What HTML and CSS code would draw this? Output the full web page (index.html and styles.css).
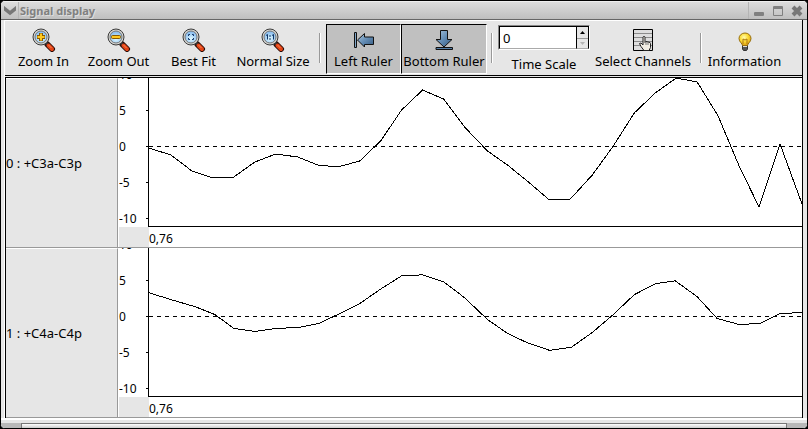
FILE: index.html
```html
<!DOCTYPE html>
<html lang="en">
<head>
<meta charset="utf-8">
<meta name="viewport" content="width=device-width, initial-scale=1">
<title>Signal display</title>
<link rel="stylesheet" href="styles.css">
</head>
<body>
<svg class="defs" width="0" height="0" aria-hidden="true">
  <defs>
    <radialGradient id="glass" cx="50%" cy="65%" r="60%"><stop offset="0" stop-color="#e4fbff"/><stop offset="1" stop-color="#83b9ee"/></radialGradient>
    <linearGradient id="steel" x1="0" y1="0" x2="1" y2="1"><stop offset="0" stop-color="#a9c6de"/><stop offset=".5" stop-color="#638cb4"/><stop offset="1" stop-color="#34597f"/></linearGradient>
    <radialGradient id="bulb" cx="42%" cy="35%" r="65%"><stop offset="0" stop-color="#fffbb0"/><stop offset=".5" stop-color="#fbdc37"/><stop offset="1" stop-color="#e0a010"/></radialGradient>
    <symbol id="lens" viewBox="0 0 24 24">
      <path d="M15.5 16.5l4.5 4.5" stroke="#2a0d08" stroke-width="6" stroke-linecap="round"/>
      <path d="M13.500 14.500l2 2" stroke="#333" stroke-width="3"/>
      <path d="M16.500 17.500l3.500 3.500" stroke="#e34416" stroke-width="4" stroke-linecap="round"/>
      <path d="M16.500 17l3 3" stroke="#ff8855" stroke-width="1"/>
      <circle cx="9" cy="9" r="8" fill="#d7d7d3" stroke="#3a3a3a"/>
      <circle cx="9" cy="9" r="6" fill="url(#glass)" stroke="#777"/>
    </symbol>
  </defs>
</svg>
<div class="window">
  <header class="titlebar">
    <button class="wm menu" aria-label="Window menu"><svg width="14" height="10" viewBox="0 0 14 10"><path d="M2 2l5 4 5-4v2L7 8 2 4z" fill="#777" stroke="#777" stroke-width="2"/></svg></button>
    <h1>Signal display</h1>
    <div class="wm-group">
      <button class="wm" aria-label="Minimize"><svg width="12" height="12"><rect x="1" y="7" width="10" height="4" rx="1" fill="#808080"/></svg></button>
      <button class="wm" aria-label="Maximize"><svg width="12" height="12"><path d="M1.500 2v8.500h9V2" fill="none" stroke="#808080"/><rect x="1" y="1" width="10" height="3" rx="1" fill="#808080"/></svg></button>
      <button class="wm" aria-label="Close"><svg width="12" height="12"><path d="M2 2l8 8M10 2l-8 8" stroke="#777" stroke-width="4"/></svg></button>
    </div>
  </header>
  <div class="frame">
    <nav class="toolbar" aria-label="Signal tools">
      <button class="tool"><svg width="24" height="24"><use href="#lens"/><path d="M9 5v8M5 9h8" stroke="#8a5a00" stroke-width="4"/><path d="M9 5.500v7M5.500 9h7" stroke="#ffc81e" stroke-width="2"/></svg><span>Zoom In</span></button>
      <button class="tool"><svg width="24" height="24"><use href="#lens"/><rect x="4.500" y="7.500" width="9" height="3" rx="1" fill="#ffc81e" stroke="#8a5a00"/></svg><span>Zoom Out</span></button>
      <button class="tool"><svg width="24" height="24"><use href="#lens"/><path d="M8 6.500H6.500V8M10 6.500h1.500V8M6.500 10v1.500H8M11.500 10v1.500H10" fill="none" stroke="#123b70" stroke-width="1"/></svg><span>Best Fit</span></button>
      <button class="tool wide"><svg width="24" height="24"><use href="#lens"/><path d="M5 7.500l1.500-1v5M11 7.500l1.500-1v5M9 7v2M9 10v2" fill="none" stroke="#0d3566" stroke-width="1"/></svg><span>Normal Size</span></button>
      <i class="sep"></i>
      <button class="tool toggle" aria-pressed="true"><svg width="24" height="24"><path d="M2.500 4.500h2v15h-2z" fill="#7fa5c8" stroke="#111"/><path d="M5.500 12l7-6.500V9H21.500v7.500H12.500V19z" fill="url(#steel)" stroke="#111"/></svg><span>Left Ruler</span></button>
      <button class="tool toggle long" aria-pressed="true"><svg width="24" height="24"><path d="M8.500 2.500h7v9h4.500l-8 7.500-8-7.500h4.500z" fill="url(#steel)" stroke="#111"/><path d="M4 19.500h16.500v2H4z" fill="#557fa9" stroke="#111"/></svg><span>Bottom Ruler</span></button>
      <i class="sep"></i>
      <div class="scale">
        <div class="spin">
          <input id="scale" type="text" inputmode="numeric" value="0">
          <div class="steps">
            <button aria-label="Increase"><svg width="5" height="3"><path d="M0 3L2.500 0 5 3z"/></svg></button>
            <button aria-label="Decrease" disabled><svg width="5" height="3"><path d="M0 0h5L2.500 3z" fill="#b5b5b5"/></svg></button>
          </div>
        </div>
        <label for="scale">Time Scale</label>
      </div>
      <button class="tool channels"><svg width="24" height="24"><path d="M2.500 1.500h19v21h-19z" fill="#dedede" stroke="#000"/><path d="M3 5.500h18M3 9.500h18M3 13.500h18M3 17.500h18" stroke="#8b8b8b"/><path d="M12 9.500c0-1.500 2-1.500 2 0v5l1-1 2 .5 2 .5.500 1v4l-1.500 3h-5l-3-4-1.500-3 1.500-.5 2 2z" fill="#f2eee4" stroke="#222"/><path d="M15 14v3M17 14.500V17" stroke="#777"/></svg><span>Select Channels</span></button>
      <i class="sep"></i>
      <button class="tool"><svg width="24" height="24"><path d="M9.500 17h5v4l-1 1.500h-3l-1-1.500z" fill="#555" stroke="#333"/><path d="M10 18.500h4" stroke="#ddd"/><path d="M9.500 17.500c0-2-3.500-3.500-3.500-7a6 5.500 0 0 1 12 0c0 3.500-3.500 5-3.500 7z" fill="url(#bulb)" stroke="#97700f"/><path d="M10 16v-5l2 1 2-1v5" fill="none" stroke="#ad7715"/></svg><span>Information</span></button>
    </nav>
    <main class="signals">
      <section class="signal">
        <h2>0 : +C3a-C3p</h2>
        <div class="yaxis"><span>10</span><span>5</span><span>0</span><span>-5</span><span>-10</span></div>
        <svg class="plot" viewBox="148 78 654 148" preserveAspectRatio="none" role="img" aria-label="Signal C3a-C3p">
          <path class="zero" d="M148 146.500H802"/>
          <polyline points="148,148 170,155 191,171 212,178 233,177 254,162 275,154 297,157 317,165 337,167 359,161 380,141 401,110 422,90 443,99 464,127 487,151 507,165 528,182 549,200 570,199 592,175 613,146 634,113 655,93 676,78 697,82 718,116 739,166 759,207 780,144 802,204"/>
        </svg>
        <div class="corner"></div>
        <div class="xaxis">0,76</div>
      </section>
      <section class="signal">
        <h2>1 : +C4a-C4p</h2>
        <div class="yaxis"><span>10</span><span>5</span><span>0</span><span>-5</span><span>-10</span></div>
        <svg class="plot" viewBox="148 248 654 149" preserveAspectRatio="none" role="img" aria-label="Signal C4a-C4p">
          <path class="zero" d="M148 316.500H802"/>
          <polyline points="148,293 170,300 194,307 214,315 233,329 254,332 275,329 298,328 318,324 337,315 359,304 379,290 401,276 422,275 443,282 464,298 487,320 507,334 526,343 549,351 571,348 592,333 613,315 634,295 655,284 675,281 697,297 717,319 739,325 760,324 780,314 802,313"/>
        </svg>
        <div class="corner"></div>
        <div class="xaxis">0,76</div>
      </section>
    </main>
  </div>
  <footer class="grip"><i></i><b></b><i></i></footer>
</div>
</body>
</html>
```
FILE: styles.css
```css
* { box-sizing: border-box; }
body {
  margin: 0;
  background: #000;
  color: #000;
  font: 12px/16px "Noto Sans", "Open Sans", sans-serif;
}
button { margin: 0; padding: 0; border: 0; background: none; color: inherit; font: inherit; }
h1, h2 { margin: 0; font: inherit; }
svg { display: block; flex: none; }
.defs { position: absolute; }

.window {
  display: flex;
  flex-direction: column;
  height: 100vh;
  border: 1px solid #000;
  border-radius: 5px;
  overflow: hidden;
  background: #e6e6e6;
}
.titlebar {
  display: flex;
  align-items: center;
  flex: none;
  height: 19px;
  border-top: 1px solid #eee;
  border-bottom: 1px solid #666;
  background: linear-gradient(#dcdcdc, #bfbfbf);
}
.titlebar h1 {
  flex: 1;
  padding-left: 1px;
  color: #808080;
  font-size: 11px;
  font-weight: 700;
  text-shadow: 1px 1px #dedede;
}
.wm { display: grid; place-items: center; height: 17px; }
.menu { width: 18px; border-right: 1px solid #b5b5b5; }
.wm-group { display: flex; gap: 7px; padding: 0 4px; border-left: 1px solid #b5b5b5; }

.frame {
  display: flex;
  flex-direction: column;
  flex: 1;
  min-height: 0;
  margin: 0 4px 0 3px;
  border-left: 1px solid #fff;
  border-right: 1px solid #000;
}
.toolbar {
  display: flex;
  align-items: flex-start;
  flex: none;
  height: 58px;
  padding: 3px 0 0 1px;
  border-top: 1px solid #fff;
  border-bottom: 3px double #000;
  background: #e6e6e6;
  font-size: 13px;
}
.tool {
  display: flex;
  flex-direction: column;
  align-items: center;
  flex: none;
  gap: 1px;
  width: 75px;
  height: 50px;
  padding-top: 4px;
  white-space: nowrap;
}
.tool.wide { width: 84px; }
.tool.long { width: 86px; }
.tool.channels { width: 106px; }
.toggle {
  border: 1px solid;
  border-color: #000 #fff #fff #000;
  background: #c0c0c0;
  padding-top: 3px;
}
.sep {
  flex: none;
  width: 2px;
  height: 30px;
  margin: 9px 5px 0 4px;
  border-left: 1px solid #999;
  border-right: 1px solid #fff;
}
.scale {
  display: flex;
  flex-direction: column;
  align-items: center;
  flex: none;
  gap: 6px;
  width: 92px;
  padding-top: 1px;
}
.spin { display: flex; width: 100%; height: 25px; border: 1px solid; border-color: #888 #fff #fff #888; }
.spin input {
  flex: 1;
  min-width: 0;
  padding: 0 3px;
  border: 1px solid #000;
  border-right: 0;
  border-bottom-color: #aaa;
  border-radius: 0;
  outline: 0;
  background: #fff;
  font: inherit;
}
.steps { display: grid; grid-template-rows: 1fr 1fr; width: 13px; border: 1px solid #000; border-bottom-color: #aaa; }
.steps button { display: grid; place-items: center; }
.steps button + button { border-top: 1px solid #999; }

.signals { display: flex; flex-direction: column; flex: 1; min-height: 0; border-left: 1px solid #000; }
.signal {
  display: grid;
  grid-template: minmax(0, 1fr) 20px / 112px 31px minmax(0, 1fr);
  flex: 1;
  min-height: 0;
  border-bottom: 1px solid #999;
  background: #fff;
}
.signal h2 {
  grid-row: 1 / 3;
  display: flex;
  align-items: center;
  border-top: 1px solid #fff;
  border-right: 1px solid #999;
  background: #e6e6e6;
  font-size: 13px;
}
.yaxis {
  display: flex;
  flex-direction: column;
  overflow: hidden;
  padding-left: 1px;
  border-right: 1px solid #000;
  line-height: 36px;
}
.yaxis span {
  flex: none;
  height: 36px;
  background: linear-gradient(#000, #000) right 17px / 2px 1px no-repeat;
}
.yaxis span:first-child { margin-top: -21px; }
.plot { width: 100%; height: 100%; min-height: 0; border-bottom: 1px solid #000; overflow: hidden; }
.plot > * { fill: none; stroke: #000; stroke-width: 1px; shape-rendering: crispEdges; vector-effect: non-scaling-stroke; }
.zero { stroke-dasharray: 4 4; }
.corner { margin-left: 1px; background: #e6e6e6; }
.xaxis { padding: 4px 0 0; overflow: hidden; line-height: 16px; }

.grip { display: flex; flex: none; height: 10px; border-top: 2px solid #fff; background: #e6e6e6; }
.grip i { width: 20px; margin-top: 3px; background: #b8b8b8; }
.grip b { flex: 1; margin-top: 3px; border: 1px solid #777; border-bottom: 0; background: linear-gradient(#fff, #ccc); }
```
